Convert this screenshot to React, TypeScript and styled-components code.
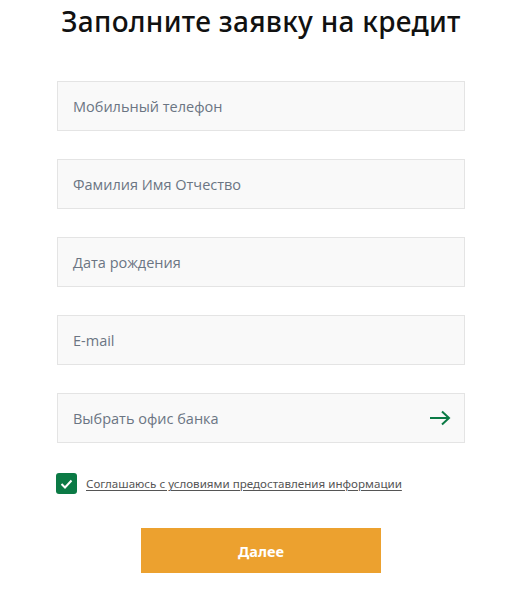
import React from "react";
import styled, { createGlobalStyle } from "styled-components";

const Global = createGlobalStyle`
  html, body { margin: 0; padding: 0; background: #fff; }
  body { font-family: "Open Sans", "Noto Sans", sans-serif; }
`;

const Form = styled.form`
  width: 408px;
  margin-left: 57px;
  display: flex;
  flex-direction: column;
`;

const Title = styled.h1`
  margin: 0;
  padding-top: 3px;
  height: 81px;
  box-sizing: border-box;
  font-family: "Noto Sans", sans-serif;
  font-weight: 500;
  font-size: 28px;
  line-height: 36px;
  color: #111;
  text-align: center;
  letter-spacing: 0.3px;
`;

const Fields = styled.div`
  display: flex;
  flex-direction: column;
  gap: 28px;
`;

const Field = styled.div`
  height: 50px;
  box-sizing: border-box;
  border: 1px solid #e4e4e4;
  background: #f9f9f9;
  display: flex;
  align-items: center;
  padding: 0 13px 0 15px;
  justify-content: space-between;
`;

const Placeholder = styled.span`
  font-size: 14.5px;
  color: #6b7583;
`;

const CheckRow = styled.label`
  display: flex;
  align-items: center;
  gap: 9px;
  margin-top: 30px;
  margin-left: -1px;
`;

const Box = styled.span`
  width: 21px;
  height: 21px;
  border-radius: 3px;
  background: #0b7a45;
  display: flex;
  align-items: center;
  justify-content: center;
`;

const CheckText = styled.span`
  font-family: "Noto Sans", sans-serif;
  font-size: 11.6px;
  color: #555;
  text-decoration: underline;
  text-underline-offset: 2px;
`;

const Button = styled.button`
  align-self: center;
  margin-top: 34px;
  width: 240px;
  height: 45px;
  border: none;
  background: #eca12f;
  color: #fff;
  font-family: "Noto Sans", sans-serif;
  font-weight: 700;
  font-size: 14.5px;
`;

const fields = ["Мобильный телефон", "Фамилия Имя Отчество", "Дата рождения", "E-mail"];

export default function App() {
  return (
    <>
      <Global />
      <Form onSubmit={(e) => e.preventDefault()}>
        <Title>Заполните заявку на кредит</Title>
        <Fields>
          {fields.map((f) => (
            <Field key={f}>
              <Placeholder>{f}</Placeholder>
            </Field>
          ))}
          <Field>
            <Placeholder>Выбрать офис банка</Placeholder>
            <svg width="22" height="16" viewBox="0 0 22 16" fill="none">
              <path d="M1 8H20M13 1.5L20 8L13 14.5" stroke="#0b7a45" strokeWidth="2" />
            </svg>
          </Field>
        </Fields>
        <CheckRow>
          <Box>
            <svg width="13" height="10" viewBox="0 0 13 10" fill="none">
              <path d="M1.5 5L5 8.5L11.5 1.5" stroke="#fff" strokeWidth="2" />
            </svg>
          </Box>
          <CheckText>Соглашаюсь с условиями предоставления информации</CheckText>
        </CheckRow>
        <Button type="submit">Далее</Button>
      </Form>
    </>
  );
}
